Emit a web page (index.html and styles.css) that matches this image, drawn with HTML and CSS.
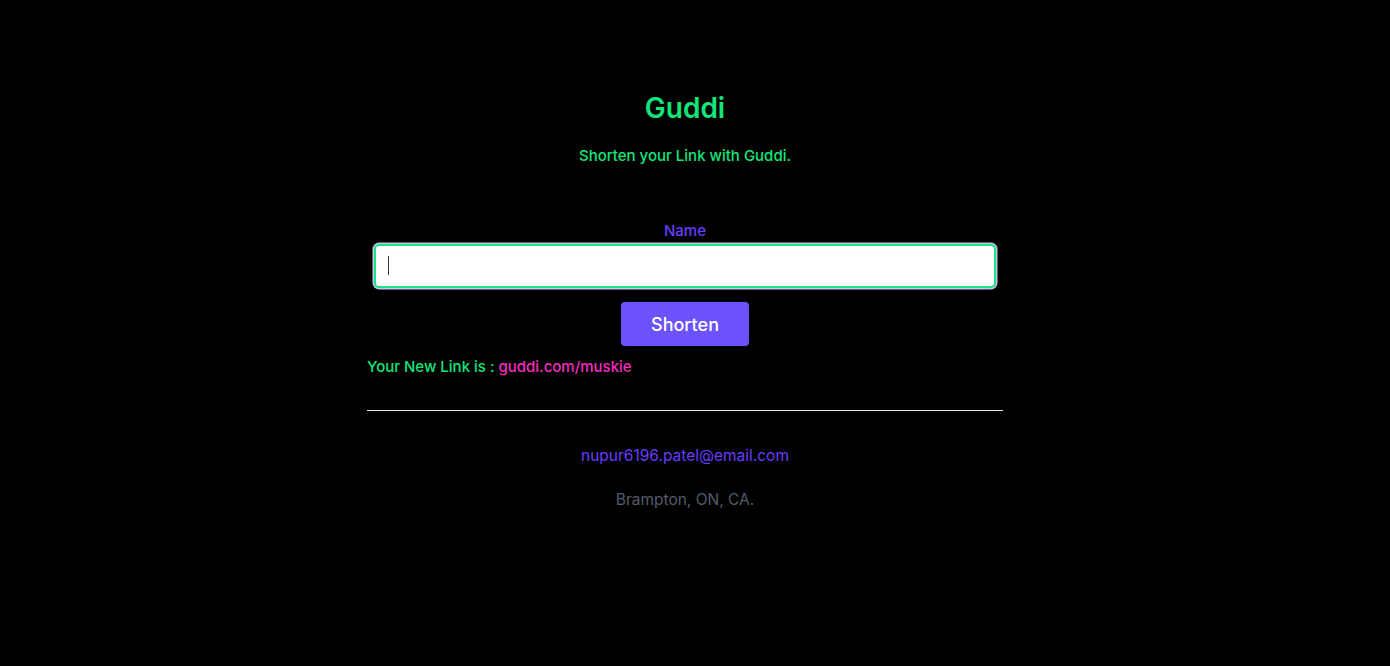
FILE: index.html
```html
<!DOCTYPE html>
<html lang="en">
<head>
<meta charset="utf-8">
<title>Guddi</title>
<link rel="stylesheet" href="styles.css">
</head>
<body>
<main class="page">
  <header class="hero">
    <h1 class="title">Guddi</h1>
    <p class="subtitle">Shorten your Link with Guddi.</p>
  </header>
  <form class="form">
    <label class="label" for="name">Name</label>
    <div class="field">
      <input class="input" id="name" type="text" autofocus>
      <span class="caret"></span>
    </div>
    <button class="button" type="button">Shorten</button>
  </form>
  <p class="result">Your New Link is : <a class="result-link" href="#">guddi.com/muskie</a></p>
  <hr class="divider">
  <footer class="footer">
    <a class="email" href="#">nupur6196.patel@email.com</a>
    <p class="location">Brampton, ON, CA.</p>
  </footer>
</main>
</body>
</html>
```

FILE: styles.css
```css
* { box-sizing: border-box; }
html, body { margin: 0; background: #000; }
body {
  font-family: Inter, "Noto Sans", "Liberation Sans", sans-serif;
  color: #fff;
  padding-right: 20px;
}
.page {
  width: 636px;
  margin: 0 auto;
  padding-top: 90px;
}
.hero { text-align: center; }
.title {
  margin: 0;
  font-size: 28px;
  line-height: 36px;
  font-weight: 600;
  color: #12e57a;
}
.subtitle {
  margin: 20px 0 0;
  font-size: 15px;
  line-height: 20px;
  font-weight: 500;
  color: #12e57a;
}
.form {
  display: flex;
  flex-direction: column;
  align-items: center;
  margin-top: 55px;
}
.label {
  font-size: 15px;
  line-height: 20px;
  font-weight: 500;
  color: #6a3cff;
  margin-bottom: 3px;
}
.field {
  position: relative;
}
.input {
  display: block;
  width: 622px;
  height: 44px;
  border: 2px solid #1de287;
  border-radius: 5px;
  box-shadow: 0 0 0 1.5px #c2c6ec;
  background: #fff;
  padding: 0 12px;
  font-size: 16px;
  outline: none;
  caret-color: #1f2937;
}
.caret {
  position: absolute;
  left: 14px;
  top: 12px;
  width: 1px;
  height: 19px;
  background: #2b3440;
}
.button {
  margin-top: 14px;
  width: 128px;
  height: 44px;
  border: none;
  border-radius: 4px;
  background: #6c52fb;
  color: #fff;
  font-family: inherit;
  font-size: 18px;
  font-weight: 500;
}
.result {
  margin: 11px 0 0;
  font-size: 15px;
  line-height: 20px;
  font-weight: 500;
  color: #12e57a;
}
.result-link {
  color: #f52cbf;
  text-decoration: none;
}
.divider {
  margin: 33px 0 0;
  border: none;
  border-top: 1px solid #e5e7eb;
}
.footer {
  display: flex;
  flex-direction: column;
  align-items: center;
  padding-top: 35px;
}
.email {
  font-size: 15.5px;
  line-height: 20px;
  color: #6a3cff;
  text-decoration: none;
}
.location {
  margin: 24px 0 0;
  font-size: 15.5px;
  line-height: 20px;
  color: #525c6b;
}
```
